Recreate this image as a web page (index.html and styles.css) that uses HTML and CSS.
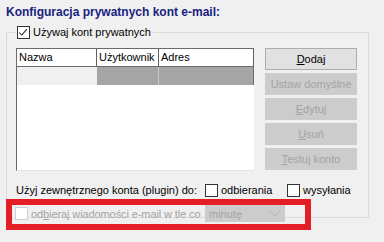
FILE: index.html
```html
<!DOCTYPE html>
<html lang="pl">
<head>
<meta charset="utf-8">
<link rel="stylesheet" href="styles.css">
</head>
<body>
<div class="page">
  <div class="title">Konfiguracja prywatnych kont e-mail:</div>
  <fieldset class="group">
    <legend class="legend">
      <span class="check"><svg viewBox="0 0 13 13" width="11" height="11"><path d="M1.5 6.5 L4.5 9.5 L10.5 2.5" fill="none" stroke="#222" stroke-width="1.2"/></svg></span>
      <span>Używaj kont prywatnych</span>
    </legend>
    <div class="inner">
      <div class="top">
        <div class="list">
          <div class="row head">
            <div class="c c1">Nazwa</div>
            <div class="c c2">Użytkownik</div>
            <div class="c c3">Adres</div>
          </div>
          <div class="row sel">
            <div class="c c1"></div>
            <div class="c c2"></div>
            <div class="c c3"></div>
          </div>
        </div>
        <div class="buttons">
          <div class="btn"><u>D</u>odaj</div>
          <div class="btn off">Ustaw domyślne</div>
          <div class="btn off"><u>E</u>dytuj</div>
          <div class="btn off"><u>U</u>suń</div>
          <div class="btn off"><u>T</u>estuj konto</div>
        </div>
      </div>
      <div class="plug">
        <span class="plug-label">Użyj zewnętrznego konta (plugin) do:</span>
        <span class="opt opt1"><span class="check"></span><span>odbierania</span></span>
        <span class="opt"><span class="check"></span><span>wysyłania</span></span>
      </div>
      <div class="bg">
        <span class="bg-label"><span class="check dis"></span><span class="dtext">od<u>b</u>ieraj wiadomości e-mail w tle co</span></span>
        <span class="select"><span>minutę</span><svg viewBox="0 0 12 7" width="12" height="7"><path d="M0.5 0.5 L6 6 L11.5 0.5" fill="none" stroke="#b8b8b8" stroke-width="1"/></svg></span>
      </div>
    </div>
  </fieldset>
  <div class="highlight"></div>
</div>
</body>
</html>
```
FILE: styles.css
```css
html, body {
  margin: 0;
  padding: 0;
  background: #f0f0f0;
}
body {
  font-family: "Liberation Sans", Arial, sans-serif;
  font-size: 11px;
  color: #000;
  width: 384px;
  height: 242px;
  overflow: hidden;
  white-space: nowrap;
}
.page {
  position: relative;
  width: 384px;
  height: 242px;
}
.title {
  padding: 5px 6px 0;
  height: 21px;
  font-size: 12px;
  font-weight: bold;
  color: #18237f;
  line-height: 15px;
}
.group {
  margin: 0 0 0 6px;
  padding: 0;
  width: 361px;
  height: 190px;
  border: 1px solid #dcdcdc;
  box-sizing: content-box;
}
.legend {
  margin-left: 8px;
  padding: 0 2px;
  height: 13px;
  line-height: 13px;
  display: flex;
  align-items: center;
  gap: 3px;
}
.check {
  width: 11px;
  height: 11px;
  border: 1px solid #333;
  background: #fff;
  display: inline-flex;
  align-items: center;
  justify-content: center;
  flex: none;
}
.check.dis {
  border-color: #cfcfcf;
}
.inner {
  padding: 9px 0 0 9px;
}
.top {
  display: flex;
  align-items: flex-start;
}
.list {
  width: 237px;
  height: 121px;
  border-left: 1px solid #6a6a6a;
  border-bottom: 1px solid #e3e3e3;
  border-top: 1px solid #6a6a6a;
  background: #fff;
  box-sizing: content-box;
}
.row {
  display: flex;
  height: 18px;
}
.row.head {
  height: 17px;
  border-bottom: 1px solid #6a6a6a;
}
.c {
  height: 100%;
  padding-left: 2px;
  line-height: 17px;
  box-sizing: border-box;
}
.c1 { width: 80px; }
.c2 { width: 62px; }
.c3 { flex: 1; }
.head .c1, .head .c2, .head .c3 {
  border-right: 1px solid #5f5f5f;
}
.sel .c1 { background: #f0f0f0; }
.sel .c2 { background: #a5a5a5; border-right: 1px solid #c8c8c8; }
.sel .c3 { background: #a5a5a5; border-right: 1px solid #6a6a6a; }
.buttons {
  margin-left: 11px;
  display: flex;
  flex-direction: column;
  gap: 3px;
}
.btn {
  width: 92px;
  height: 22px;
  box-sizing: border-box;
  border: 1px solid #adadad;
  background: #e1e1e1;
  text-align: center;
  line-height: 20px;
}
.btn.off {
  background: #cccccc;
  border-color: #cccccc;
  color: #a3a3a3;
}
.plug {
  margin-top: 12px;
  height: 14px;
  display: flex;
  align-items: center;
}
.plug-label {
  width: 189px;
}
.opt {
  display: flex;
  align-items: center;
  gap: 3px;
}
.opt1 {
  width: 82px;
}
.bg {
  margin-top: 8px;
  height: 17px;
  display: flex;
  align-items: center;
}
.bg-label {
  width: 189px;
  display: flex;
  align-items: center;
  gap: 3px;
  margin-left: -1px;
}
.dtext {
  color: #a3a3a3;
  letter-spacing: -0.1px;
}
.select {
  margin-left: 1px;
  width: 80px;
  height: 17px;
  background: #cccccc;
  color: #a3a3a3;
  display: flex;
  align-items: center;
  justify-content: space-between;
  padding: 0 4px;
  box-sizing: border-box;
}
.highlight {
  position: absolute;
  left: 6px;
  top: 199px;
  width: 305px;
  height: 31px;
  border: 6px solid #e31e26;
  box-sizing: border-box;
}
```
